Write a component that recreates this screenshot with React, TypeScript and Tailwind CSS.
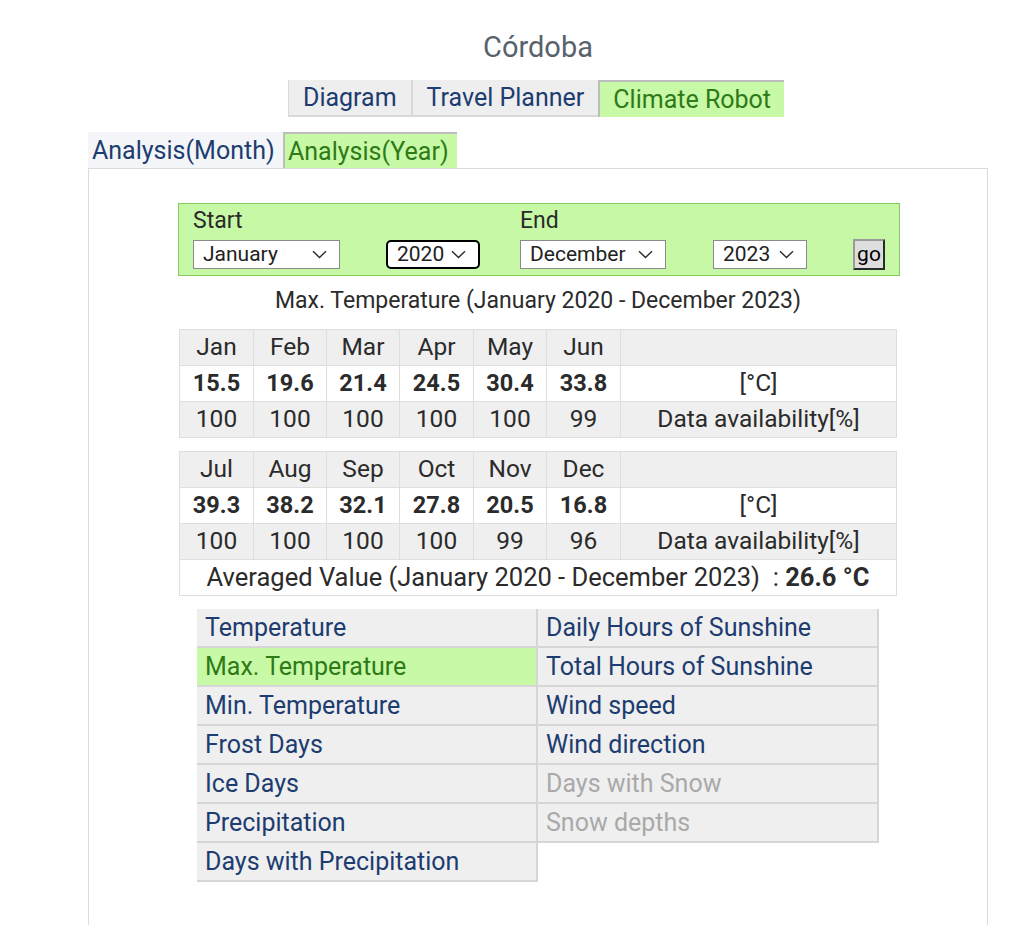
import React from 'react';

const blue = 'text-[#1d3c70]';

function Chevron() {
  return (
    <svg width="15" height="9" viewBox="0 0 15 9" fill="none">
      <path d="M1 1.2 L7.5 7.5 L14 1.2" stroke="#2a2a2a" strokeWidth="1.4" />
    </svg>
  );
}

function FakeSelect({ value, width, focused }: { value: string; width: string; focused?: boolean }) {
  return (
    <div
      className={`${width} h-[29px] bg-white flex items-center justify-between pl-[9px] pr-[12px] text-[21px] leading-none text-[#222] ${
        focused ? 'border-[2.5px] border-black rounded-[5px]' : 'border border-[#8a8a8a]'
      }`}
    >
      <span>{value}</span>
      <Chevron />
    </div>
  );
}

const rows = [
  {
    months: ['Jan', 'Feb', 'Mar', 'Apr', 'May', 'Jun'],
    values: ['15.5', '19.6', '21.4', '24.5', '30.4', '33.8'],
    avail: ['100', '100', '100', '100', '100', '99'],
  },
  {
    months: ['Jul', 'Aug', 'Sep', 'Oct', 'Nov', 'Dec'],
    values: ['39.3', '38.2', '32.1', '27.8', '20.5', '16.8'],
    avail: ['100', '100', '100', '100', '99', '96'],
  },
];

const left = [
  { t: 'Temperature' },
  { t: 'Max. Temperature', active: true },
  { t: 'Min. Temperature' },
  { t: 'Frost Days' },
  { t: 'Ice Days' },
  { t: 'Precipitation' },
  { t: 'Days with Precipitation' },
];
const right = [
  { t: 'Daily Hours of Sunshine' },
  { t: 'Total Hours of Sunshine' },
  { t: 'Wind speed' },
  { t: 'Wind direction' },
  { t: 'Days with Snow', off: true },
  { t: 'Snow depths', off: true },
];

function MonthTable({ r, avg }: { r: (typeof rows)[number]; avg?: boolean }) {
  const cell = 'border border-[#dedede] text-center h-[36px] p-0 leading-none';
  return (
    <table className="w-[718px] table-fixed border-collapse text-[24.5px] text-[#2b2b2b]">
      <colgroup>
        <col className="w-[74px]" />
        <col className="w-[73px]" />
        <col className="w-[73px]" />
        <col className="w-[74px]" />
        <col className="w-[73px]" />
        <col className="w-[74px]" />
        <col />
      </colgroup>
      <tbody>
        <tr className="bg-[#efefef]">
          {r.months.map((m) => (
            <td key={m} className={cell}>{m}</td>
          ))}
          <td className={cell}></td>
        </tr>
        <tr className="bg-white">
          {r.values.map((v, i) => (
            <td key={i} className={`${cell} font-bold text-[23.5px]`}>{v}</td>
          ))}
          <td className={cell}>[°C]</td>
        </tr>
        <tr className="bg-[#efefef]">
          {r.avail.map((v, i) => (
            <td key={i} className={cell}>{v}</td>
          ))}
          <td className={cell}>Data availability[%]</td>
        </tr>
        {avg && (
          <tr className="bg-white">
            <td colSpan={7} className={`${cell} text-[25.5px]`}>
              Averaged Value (January 2020 - December 2023)&nbsp; : <b>26.6 °C</b>
            </td>
          </tr>
        )}
      </tbody>
    </table>
  );
}

function MenuItem({ t, active, off }: { t: string; active?: boolean; off?: boolean }) {
  const color = active ? 'text-[#2e7a16] bg-[#c7f9a7]' : off ? 'text-[#a9a9a9] bg-[#efefef]' : `${blue} bg-[#efefef]`;
  return (
    <div className={`h-[39px] flex items-center pl-[8px] text-[25px] leading-none border-b-2 border-r-2 border-[#d6d6d6] ${color}`}>
      {t}
    </div>
  );
}

export default function App() {
  return (
    <div className="min-h-[925px] bg-white font-[Roboto,sans-serif] overflow-hidden">
      <div className="ml-[88px] w-[900px]">
        <div className="pt-[30px] h-[80px] text-center text-[29px] leading-[34px] text-[#58626c]">Córdoba</div>

        <div className="flex justify-center pr-[4px] h-[37px] text-[25px] leading-none">
          <div className="flex">
            <div className={`px-[14px] flex items-center bg-[#eeeeee] border-l border-b-2 border-[#d9d9d9] ${blue}`}>Diagram</div>
            <div className={`px-[14px] flex items-center bg-[#eeeeee] border-l-2 border-b-2 border-[#d9d9d9] ${blue}`}>Travel Planner</div>
            <div className="px-[13px] flex items-center bg-[#c7f9a7] border-l-2 border-t-2 border-[#bdbdbd] text-[#2e7a16]">Climate Robot</div>
          </div>
        </div>

        <div className="flex mt-[15px] h-[36px] text-[25px] leading-none">
          <div className={`pl-[4px] w-[195px] flex items-center bg-[#f3f5f8] ${blue}`}>Analysis(Month)</div>
          <div className="px-[3px] w-[174px] flex items-center bg-[#c7f9a7] border-l-2 border-t-2 border-[#bdbdbd] text-[#2e7a16]">Analysis(Year)</div>
        </div>

        <div className="border border-[#dcdcdc] min-h-[760px] pt-[34px]">
          <div className="flex flex-col items-center">
            <div className="w-[722px] h-[73px] ml-[2px] bg-[#c6f8a6] border border-[#86c95e] pl-[14px] pt-[3px] text-[#2a2a2a]">
              <div className="flex text-[23px] leading-[28px]">
                <span className="w-[327px]">Start</span>
                <span>End</span>
              </div>
              <div className="flex items-center mt-[4px]">
                <FakeSelect value="January" width="w-[147px]" />
                <div className="w-[46px]" />
                <FakeSelect value="2020" width="w-[94px]" focused />
                <div className="w-[40px]" />
                <FakeSelect value="December" width="w-[146px]" />
                <div className="w-[47px]" />
                <FakeSelect value="2023" width="w-[94px]" />
                <div className="w-[46px]" />
                <div className="w-[32px] h-[31px] bg-[#dedede] border-2 border-t-[#9a9a9a] border-l-[#9a9a9a] border-r-[#2a2a2a] border-b-[#2a2a2a] flex items-center justify-center text-[21px] text-black leading-none">
                  go
                </div>
              </div>
            </div>

            <div className="mt-[10px] h-[43px] text-[23px] text-[#2b2b2b] leading-[30px]">
              Max. Temperature (January 2020 - December 2023)
            </div>

            <MonthTable r={rows[0]} />
            <div className="h-[13px]" />
            <MonthTable r={rows[1]} avg />

            <div className="mt-[13px] w-[682px] flex">
              <div className="w-[341px] flex flex-col">
                {left.map((i) => (
                  <MenuItem key={i.t} {...i} />
                ))}
              </div>
              <div className="w-[341px] flex flex-col">
                {right.map((i) => (
                  <MenuItem key={i.t} {...i} />
                ))}
              </div>
            </div>
          </div>
        </div>
      </div>
    </div>
  );
}
